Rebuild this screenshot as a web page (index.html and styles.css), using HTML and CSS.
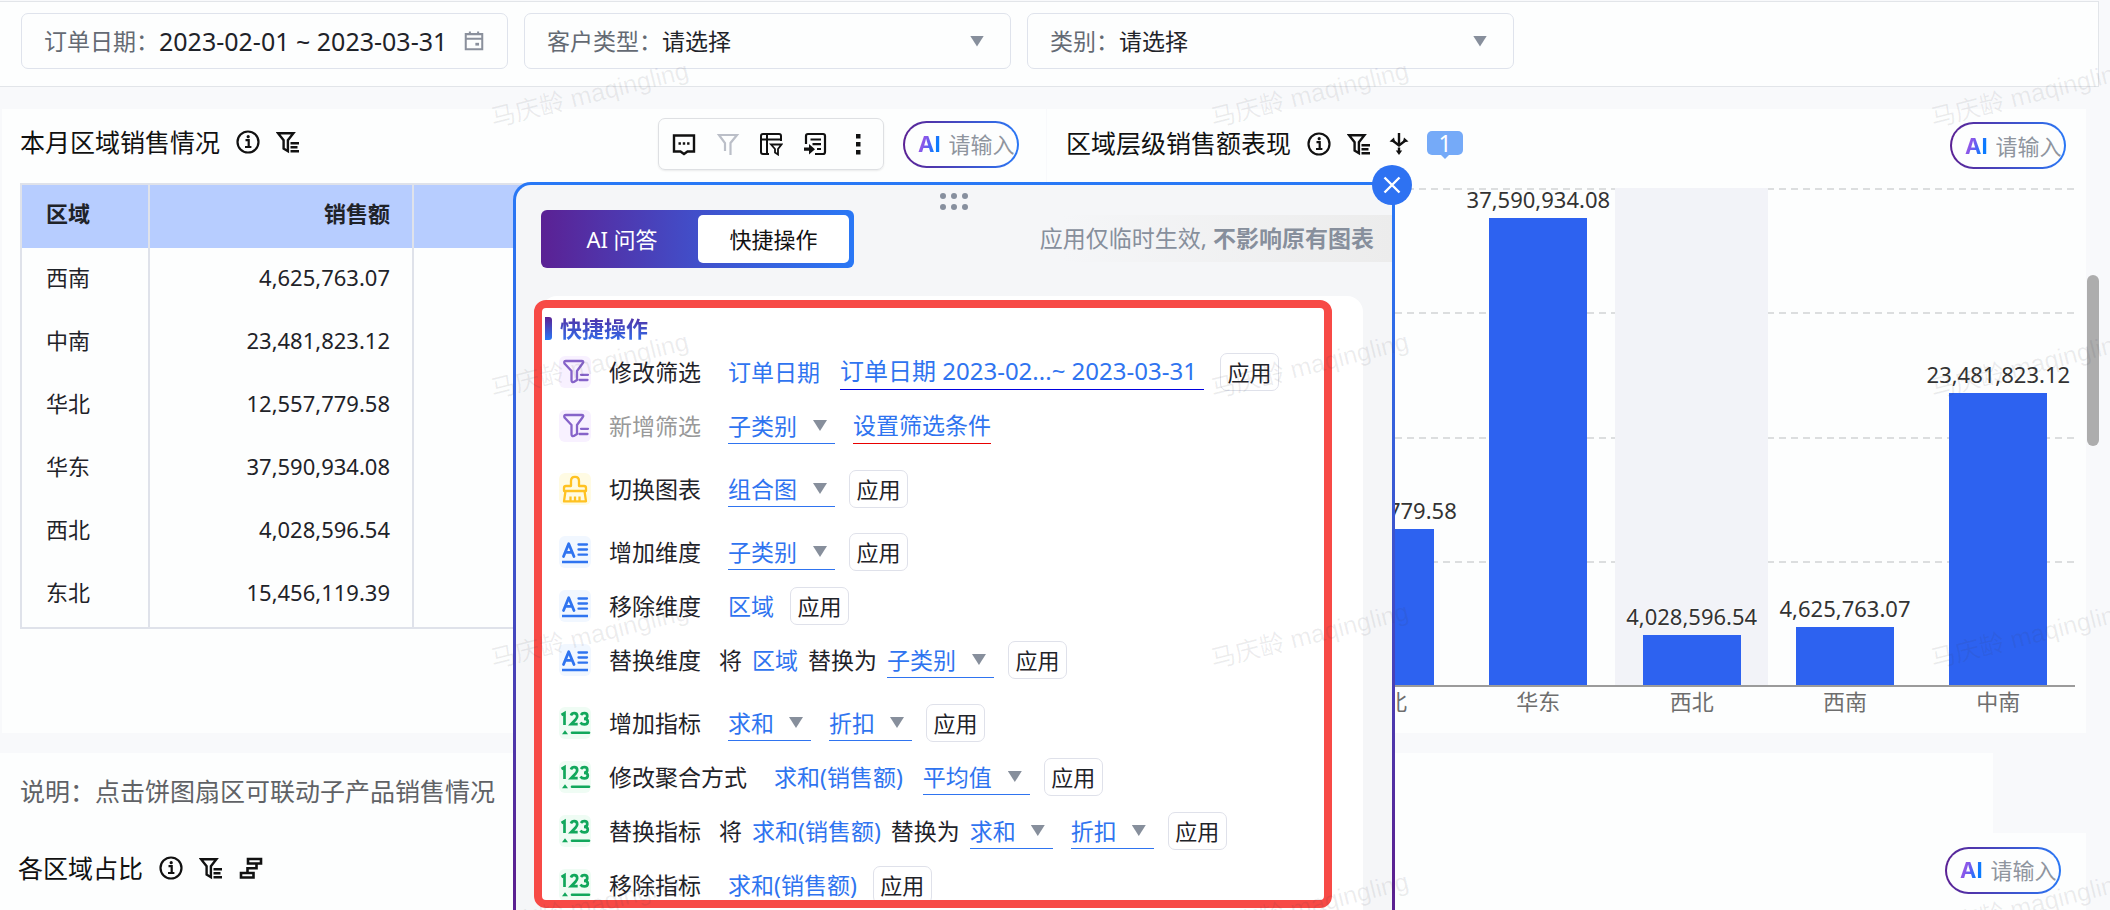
FILE: index.html
```html
<!DOCTYPE html>
<html lang="zh-CN">
<head>
<meta charset="utf-8">
<title>区域销售仪表盘</title>
<link rel="stylesheet" href="styles.css">
</head>
<body>
<svg class="defs" aria-hidden="true">
  <symbol id="i-info" viewBox="0 0 24 24"><circle cx="12" cy="12" r="10.5" fill="none" stroke="currentColor" stroke-width="2.2"/><path d="M9.500 10.200h3.200v6.600M9 17h6.400" fill="none" stroke="currentColor" stroke-width="2.200"/><circle cx="12.200" cy="6.700" r="1.600" fill="currentColor"/></symbol>
  <symbol id="i-filter" viewBox="0 0 24 24"><path d="M2 3.200h15.400L11.900 10.200v11L7.600 18.600V10.200zM14.500 13.200H23M14.500 17.200h7M14.500 21.200H23" fill="none" stroke="currentColor" stroke-width="2.400"/></symbol>
  <symbol id="i-drill" viewBox="0 0 24 24"><path d="M12 1v12M5 8l7 5.500L19 8" fill="none" stroke="currentColor" stroke-width="2.400"/><path d="M2.500 9.500 7 5.500l1.200 5zM21.500 9.500 17 5.500l-1.200 5z" fill="currentColor"/><path d="M12 15.500v4" stroke="currentColor" stroke-width="2.400"/><path d="M8.800 18.500h6.400L12 23z" fill="currentColor"/></symbol>
  <symbol id="i-link" viewBox="0 0 24 24"><path d="M9 3h13v4.500H9zM2 17h12.500v4.500H2zM17.500 7.500v4.700H8.500V17" fill="none" stroke="currentColor" stroke-width="2.600"/></symbol>
  <symbol id="i-calendar" viewBox="0 0 24 24"><path d="M3 4.500h18V21H3zM3 9.500h18M7.500 1.500v4M16.500 1.500v4" fill="none" stroke="currentColor" stroke-width="2.200"/><rect x="13.500" y="14" width="4" height="3" fill="currentColor"/></symbol>
  <symbol id="i-comment" viewBox="0 0 24 24"><path d="M2 3.500h20v16h-6.500L12 22l-3.500-2.500H2z" fill="none" stroke="currentColor" stroke-width="2.400"/><path d="M6.500 11.500h2.400M10.800 11.500h2.400M15.100 11.500h2.400" stroke="currentColor" stroke-width="2.400"/></symbol>
  <symbol id="i-funnel" viewBox="0 0 24 24"><path d="M9 19V11L3 3h18l-6.500 8v12" fill="none" stroke="currentColor" stroke-width="2.200"/></symbol>
  <symbol id="i-tablefilter" viewBox="0 0 24 24"><path d="M10 22H4a2 2 0 0 1-2-2V4a2 2 0 0 1 2-2h16a2 2 0 0 1 2 2v5M2 7.500h20M8 2v20" fill="none" stroke="currentColor" stroke-width="2"/><path d="M12 12.500h10.500L19 17v5.500l-3-2V17z" fill="none" stroke="currentColor" stroke-width="1.800"/></symbol>
  <symbol id="i-export" viewBox="0 0 24 24"><path d="M3 12V4a2 2 0 0 1 2-2h15a2 2 0 0 1 2 2v16a2 2 0 0 1-2 2h-8M7.500 7.500H18M9.500 12.200H18M14 17h4" fill="none" stroke="currentColor" stroke-width="2.200"/><path d="M1 15.500h5V12l6 5.200-6 5.200V18.800H1z" fill="currentColor"/></symbol>
  <symbol id="i-more" viewBox="0 0 24 24"><path d="M10 2h4.500v4.500H10zM10 10h4.500v4.500H10zM10 18h4.500v4.500H10z" fill="currentColor"/></symbol>
  <symbol id="i-opfilter" viewBox="0 0 32 32"><path d="M7 5h15.500q3 0 1 2.500L18 15v9l-3.200 2q-2.300.6-2.300-2v-9L5.500 7.500Q4.500 5 7 5zM22 18.800h7M20.500 24h8" fill="none" stroke="currentColor" stroke-width="2.300" stroke-linecap="round" stroke-linejoin="round"/></symbol>
  <symbol id="i-brush" viewBox="0 0 32 32"><path d="M5 18v-3q0-2 2-2h5V8q0-4.200 4-4.200T20 8v5h5q2 0 2 2v3zM6.500 18 5 28.300h22L25.500 18M11.500 28v-4.500M16 28v-4.500M20.500 28v-4.500" fill="none" stroke="currentColor" stroke-width="2.300" stroke-linejoin="round"/></symbol>
  <symbol id="i-dim" viewBox="0 0 32 32"><path d="M4.500 20.500 9.700 7.800 15 20.500M6.500 16.300h6.500" fill="none" stroke="currentColor" stroke-width="2.800" stroke-linecap="round" stroke-linejoin="round"/><path d="M19.500 8.500H28M19.500 13.500H28M19.500 18.700H28" stroke="currentColor" stroke-width="2.300" stroke-linecap="round"/><path d="M3 26h26" stroke="currentColor" stroke-width="2.300"/></symbol>
  <symbol id="i-num" viewBox="0 0 32 32"><path d="M2.500 8 5.500 6.200V18M12 8.500q.8-2.300 3.200-2.300 3 0 3 3 0 1.500-1.500 3.300l-4.500 4.600h6.500M22 8q1-1.800 3.300-1.800 3 0 3 2.800t-3.300 2.800q3.800 0 3.800 2.700 0 2.900-3.500 2.900-2.700 0-3.800-1.900" fill="none" stroke="currentColor" stroke-width="2.700"/><path d="M3 27.200 6 23.200l3 4z" fill="currentColor"/><path d="M13 25.700h17" stroke="currentColor" stroke-width="2.600" stroke-linecap="round"/></symbol>
</svg>

<header class="filters">
  <div class="filter"><label for="f-date">订单日期：</label><input id="f-date" class="date" type="text" value="2023-02-01 ~ 2023-03-31"><svg class="calendar"><use href="#i-calendar"/></svg></div>
  <div class="filter caret"><label for="f-customer">客户类型：</label><select id="f-customer"><option>请选择</option></select></div>
  <div class="filter caret"><label for="f-category">类别：</label><select id="f-category"><option>请选择</option></select></div>
</header>

<main class="board">
  <div class="cards">
    <section class="card">
      <div class="card-head">
        <h2>本月区域销售情况</h2>
        <svg class="icon"><use href="#i-info"/></svg>
        <svg class="icon"><use href="#i-filter"/></svg>
        <div class="toolbar">
          <button aria-label="评论"><svg class="icon"><use href="#i-comment"/></svg></button>
          <button aria-label="筛选" disabled><svg class="icon"><use href="#i-funnel"/></svg></button>
          <button aria-label="表格筛选"><svg class="icon"><use href="#i-tablefilter"/></svg></button>
          <button aria-label="导出"><svg class="icon"><use href="#i-export"/></svg></button>
          <button aria-label="更多"><svg class="icon"><use href="#i-more"/></svg></button>
        </div>
        <label class="ai"><span>AI</span><input type="text" placeholder="请输入"></label>
      </div>
      <table class="sales">
        <thead><tr><th>区域</th><th>销售额</th><th></th></tr></thead>
        <tbody>
          <tr><td>西南</td><td>4,625,763.07</td><td></td></tr>
          <tr><td>中南</td><td>23,481,823.12</td><td></td></tr>
          <tr><td>华北</td><td>12,557,779.58</td><td></td></tr>
          <tr><td>华东</td><td>37,590,934.08</td><td></td></tr>
          <tr><td>西北</td><td>4,028,596.54</td><td></td></tr>
          <tr><td>东北</td><td>15,456,119.39</td><td></td></tr>
        </tbody>
      </table>
    </section>

    <section class="card chart-card">
      <div class="card-head">
        <h2>区域层级销售额表现</h2>
        <svg class="icon"><use href="#i-info"/></svg>
        <svg class="icon"><use href="#i-filter"/></svg>
        <svg class="icon"><use href="#i-drill"/></svg>
        <span class="count">1</span>
        <label class="ai push"><span>AI</span><input type="text" placeholder="请输入"></label>
      </div>
      <div class="chart">
        <div class="plot">
          <div class="grid"><i></i><i></i><i></i><i></i></div>
          <div class="band"><span>15,456,119.39</span><div class="bar" style="height:38.6%"></div></div>
          <div class="band"><span>12,557,779.58</span><div class="bar" style="height:31.4%"></div></div>
          <div class="band"><span>37,590,934.08</span><div class="bar" style="height:94%"></div></div>
          <div class="band hover"><span>4,028,596.54</span><div class="bar" style="height:10.1%"></div></div>
          <div class="band"><span>4,625,763.07</span><div class="bar" style="height:11.6%"></div></div>
          <div class="band"><span>23,481,823.12</span><div class="bar" style="height:58.7%"></div></div>
        </div>
        <div class="axis"><span>东北</span><span>华北</span><span>华东</span><span>西北</span><span>西南</span><span>中南</span></div>
      </div>
    </section>
  </div>

  <p class="note">说明：点击饼图扇区可联动子产品销售情况</p>
  <section class="card share">
    <div class="card-head">
      <h2>各区域占比</h2>
      <svg class="icon"><use href="#i-info"/></svg>
      <svg class="icon"><use href="#i-filter"/></svg>
      <svg class="icon"><use href="#i-link"/></svg>
      <label class="ai push"><span>AI</span><input type="text" placeholder="请输入"></label>
    </div>
  </section>
  <div class="scrollbar"></div>
</main>

<aside class="panel">
  <button class="close" aria-label="关闭"><svg viewBox="0 0 40 40"><path d="M12.500 12.500l15 15M27.500 12.500l-15 15" stroke="currentColor" stroke-width="2.400" fill="none"/></svg></button>
  <svg class="drag" viewBox="0 0 30 20"><g fill="#878f9e"><circle cx="4" cy="4" r="3"/><circle cx="15" cy="4" r="3"/><circle cx="26" cy="4" r="3"/><circle cx="4" cy="15" r="3"/><circle cx="15" cy="15" r="3"/><circle cx="26" cy="15" r="3"/></g></svg>
  <div class="panel-head">
    <div class="tabs"><button>AI 问答</button><button class="active">快捷操作</button></div>
    <p class="notice">应用仅临时生效, <b>不影响原有图表</b></p>
  </div>
  <div class="ops">
    <h3>快捷操作</h3>
    <div class="op purple"><svg class="op-icon"><use href="#i-opfilter"/></svg><span class="name">修改筛选</span><a href="#">订单日期</a><a href="#" class="line range">订单日期 2023-02...~ 2023-03-31</a><button>应用</button></div>
    <div class="op purple off"><svg class="op-icon"><use href="#i-opfilter"/></svg><span class="name">新增筛选</span><span class="pick caret"><select aria-label="新增筛选字段"><option>子类别</option></select></span><a href="#" class="line error">设置筛选条件</a></div>
    <div class="op yellow gap"><svg class="op-icon"><use href="#i-brush"/></svg><span class="name">切换图表</span><span class="pick caret"><select aria-label="图表类型"><option>组合图</option></select></span><button>应用</button></div>
    <div class="op blue gap"><svg class="op-icon"><use href="#i-dim"/></svg><span class="name">增加维度</span><span class="pick caret"><select aria-label="增加的维度"><option>子类别</option></select></span><button>应用</button></div>
    <div class="op blue"><svg class="op-icon"><use href="#i-dim"/></svg><span class="name">移除维度</span><a href="#">区域</a><button>应用</button></div>
    <div class="op blue"><svg class="op-icon"><use href="#i-dim"/></svg><span class="name tight">替换维度</span><span class="phrase">将 <a href="#">区域</a> 替换为</span><span class="pick caret"><select aria-label="替换为维度"><option>子类别</option></select></span><button>应用</button></div>
    <div class="op green gap"><svg class="op-icon"><use href="#i-num"/></svg><span class="name">增加指标</span><span class="pick short caret"><select aria-label="增加指标聚合"><option>求和</option></select></span><span class="pick short caret"><select aria-label="增加的指标"><option>折扣</option></select></span><button>应用</button></div>
    <div class="op green"><svg class="op-icon"><use href="#i-num"/></svg><span class="name">修改聚合方式</span><a href="#">求和(销售额)</a><span class="pick caret"><select aria-label="聚合方式"><option>平均值</option></select></span><button>应用</button></div>
    <div class="op green"><svg class="op-icon"><use href="#i-num"/></svg><span class="name tight">替换指标</span><span class="phrase">将 <a href="#">求和(销售额)</a> 替换为</span><span class="pick short caret"><select aria-label="替换指标聚合"><option>求和</option></select></span><span class="pick short caret"><select aria-label="替换为指标"><option>折扣</option></select></span><button>应用</button></div>
    <div class="op green"><svg class="op-icon"><use href="#i-num"/></svg><span class="name">移除指标</span><a href="#">求和(销售额)</a><button>应用</button></div>
  </div>
  <div class="highlight"></div>
</aside>

<div class="watermark" aria-hidden="true">
  <span>马庆龄 maqingling</span><span>马庆龄 maqingling</span><span>马庆龄 maqingling</span>
  <span>马庆龄 maqingling</span><span>马庆龄 maqingling</span><span>马庆龄 maqingling</span>
  <span>马庆龄 maqingling</span><span>马庆龄 maqingling</span><span>马庆龄 maqingling</span>
  <span>马庆龄 maqingling</span><span>马庆龄 maqingling</span><span>马庆龄 maqingling</span>
</div>
</body>
</html>
```
FILE: styles.css
```css
* { box-sizing: border-box; margin: 0; padding: 0; }

body {
  position: relative;
  display: flex;
  flex-direction: column;
  height: 100vh;
  overflow: hidden;
  background: #f8f9fb;
  color: #1f2329;
  font-family: "Noto Sans", "Noto Sans CJK SC", sans-serif;
  font-size: 23px;
  line-height: 34px;
}

button, input, select { font: inherit; color: inherit; border: 0; background: none; outline: 0; }
select { appearance: none; }
a { color: #2f74f0; text-decoration: none; }
.defs { position: absolute; width: 0; height: 0; }
.icon { width: 24px; height: 24px; flex: none; }

/* filter bar */
.filters {
  display: flex;
  gap: 16px;
  margin: 1px 11px 0 0;
  padding: 11px 20px 17px 21px;
  background: #fdfefe;
  border: 1px solid #e2e5e9;
  border-left: 0;
}
.filter {
  position: relative;
  display: flex;
  align-items: center;
  width: 487px;
  height: 56px;
  padding: 0 22px;
  border: 1px solid #dfe3ec;
  border-radius: 7px;
}
.filter label { color: #646a73; white-space: nowrap; }
.filter input, .filter select { flex: 1; min-width: 0; }
.filter .date { font-size: 25px; }
.calendar { width: 22px; height: 22px; color: #8a909c; flex: none; }

.caret::after {
  content: "";
  width: 14px;
  height: 11px;
  background: #878f9c;
  clip-path: polygon(0 0, 100% 0, 50% 100%);
  pointer-events: none;
}
.filter.caret::after { margin-right: 4px; }

/* board */
.board { position: relative; display: flex; flex-direction: column; flex: 1; min-height: 0; padding: 22px 24px 0 2px; }
.cards { display: grid; grid-template-columns: 1044fr 1040fr; height: 624px; flex: none; margin-bottom: 20px; }
.card { background: #fdfefe; min-width: 0; }
.chart-card { display: flex; flex-direction: column; border-left: 1px solid #f8f9fb; }
.card-head { display: flex; align-items: center; gap: 16px; height: 69px; padding: 1px 27px 0 18px; }
.card-head h2 { padding-bottom: 5px; font-size: 25px; font-weight: 400; color: #111; white-space: nowrap; }
.card-head .icon { color: #111; margin-bottom: 4px; }

.toolbar {
  display: flex;
  align-items: center;
  justify-content: space-between;
  width: 226px;
  height: 52px;
  margin-left: auto;
  padding: 0 13px;
  border: 1px solid #dee0e3;
  border-radius: 7px;
  box-shadow: 0 1px 2px #00000014;
}
.toolbar button { display: flex; }
.toolbar .icon { margin: 0; }
.toolbar button:disabled .icon { color: #bbbfc8; }

.ai {
  display: flex;
  align-items: center;
  gap: 8px;
  width: 116px;
  height: 47px;
  flex: none;
  margin-left: 3px;
  padding-left: 13px;
  border: 2px solid transparent;
  border-radius: 24px;
  background: linear-gradient(#fdfefe, #fdfefe) padding-box, linear-gradient(90deg, #5b2194, #2a78f6) border-box;
}
.ai.push { margin-left: auto; }
.ai span {
  font-family: Inter, sans-serif;
  font-size: 22px;
  font-weight: 700;
  background: linear-gradient(110deg, #d04fd8 0, #6a5cf0 45%, #0a7bff 70%);
  background-clip: text;
  color: transparent;
}
.ai input { width: 68px; font-size: 22px; }
.ai input::placeholder { color: #8f959e; opacity: 1; }

.count {
  position: relative;
  width: 36px;
  height: 24px;
  margin-bottom: 5px;
  border-radius: 5px;
  background: #75aaf8;
  color: #fff;
  line-height: 24px;
  text-align: center;
}
.count::after {
  content: "";
  position: absolute;
  left: 13px;
  top: 23px;
  border: 5px solid transparent;
  border-top-color: #75aaf8;
  border-bottom: 0;
}

/* table */
.sales {
  width: calc(100% - 36px);
  height: 446px;
  margin: 5px 18px 0;
  border-collapse: collapse;
  table-layout: fixed;
  font-size: 22px;
  border: 2px solid #dfe2ea;
}
.sales th, .sales td { padding: 0 22px 6px 24px; text-align: left; border-right: 2px solid #dfe2ea; }
.sales th { height: 64px; padding-bottom: 8px; background: #b7cdff; }
.sales th:first-child { width: 128px; }
.sales th:nth-child(2) { width: 264px; }
.sales :is(th, td):nth-child(2) { text-align: right; }

/* chart */
.chart-card .card-head { padding: 4px 20px 0 19px; }
.chart { margin: 10px 11px 0 108px; }
.plot { position: relative; display: grid; grid-template-columns: repeat(6, 1fr); height: 499px; border-bottom: 2px solid #9b9b9b; }
.grid { position: absolute; inset: 0; display: grid; grid-template-rows: repeat(4, 1fr); }
.grid i { background: repeating-linear-gradient(90deg, #dcdedf 0 7px, transparent 7px 12px) top / 100% 2px no-repeat; }
.band { position: relative; display: flex; flex-direction: column; justify-content: flex-end; align-items: center; min-height: 0; font-size: 22px; color: #333; }
.band.hover { background: #f2f3f8; }
.band span { white-space: nowrap; line-height: 34px; margin: 0 -10px 2px; text-shadow: 0 0 2px #fff, 0 0 2px #fff; }
.bar { flex: none; width: 64%; background: #2d62f0; }
.axis { display: grid; grid-template-columns: repeat(6, 1fr); font-size: 22px; text-align: center; color: #6e6e6e; line-height: 28px; }

.note { margin: 0 93px 0 -2px; padding: 21px 20px 25px; background: #fdfefe; font-size: 25px; color: #606266; }
.share { flex: 1; min-height: 0; margin-left: -2px; }
.share .card-head { padding: 5px 25px 0 18px; }
.scrollbar { position: absolute; right: 11px; top: 188px; width: 12px; height: 171px; border-radius: 6px; background: #adadad; }

/* floating panel */
.panel {
  position: absolute;
  left: 513px;
  top: 182px;
  bottom: 0;
  display: flex;
  flex-direction: column;
  width: 882px;
  border: 3px solid transparent;
  border-bottom: 0;
  border-radius: 18px 0 0 0;
  background: linear-gradient(#f5f6f8, #f5f6f8) padding-box, linear-gradient(#2878f6, #2f6be8 20%, #3f4fc8 55%, #5b2191 95%) border-box;
}
.close {
  position: absolute;
  right: -20px;
  top: -20px;
  width: 40px;
  height: 40px;
  border-radius: 50%;
  background: #2e72f2;
  color: #fff;
}
.close svg { display: block; }
.drag { display: block; flex: none; width: 30px; height: 20px; margin: 7px auto 0; }
.panel-head { display: flex; justify-content: space-between; padding-left: 25px; }
.tabs {
  display: grid;
  grid-template-columns: 1fr 151px;
  width: 313px;
  height: 58px;
  margin: -2px 0 0;
  padding: 5px;
  border-radius: 6px;
  background: linear-gradient(90deg, #5b2194, #414fca 50%, #2a78f6);
  font-size: 22px;
  color: #fff;
}
.tabs .active { border-radius: 5px; background: #fff; color: #111; }
.notice { height: 47px; margin-top: 3px; padding: 0 18px 0 60px; line-height: 47px; color: #878f9c; background: linear-gradient(90deg, #f5f6f8 20%, #ececec); }

.ops {
  flex: 1;
  min-height: 0;
  overflow: hidden;
  margin: 28px 29px 0 25px;
  padding-top: 15px;
  border-radius: 16px 16px 0 0;
  background: #fff;
}
.ops h3 {
  display: flex;
  align-items: center;
  gap: 8px;
  margin: 0 4px 0;
  font-size: 22px;
  background: linear-gradient(#5b2194, #2a78f6);
  background-clip: text;
  color: transparent;
}
.ops h3::before { content: ""; width: 7px; height: 23px; border-radius: 0 3px 3px 0; background: linear-gradient(#5b2194, #2a78f6); }
.op { display: flex; align-items: center; height: 54px; padding-left: 18px; white-space: nowrap; }
.op.gap { margin-top: 9px; }
.op-icon { width: 32px; height: 32px; flex: none; margin-right: 18px; border-radius: 6px; }
.purple .op-icon { color: #8663c9; background: #f8f1ff; }
.yellow .op-icon { color: #ffc222; background: #fffbe3; }
.blue .op-icon { color: #2f74f0; background: #f1f7ff; }
.green .op-icon { color: #12a75c; background: #effcf4; }
.name { margin-right: 27px; }
.name.tight { margin-right: 18px; }
.off .name { color: #999; }
.op a { margin-right: 20px; }
.pick { margin-right: 18px; }
.op .phrase { margin-right: 10px; }
.op .phrase a { margin: 0 4px; }
.line { height: 36px; border-bottom: 1px solid #2f74f0; }
.range { font-size: 24px; min-width: 364px; border-bottom-color: #0000e0; }
.line.error { border-bottom-color: #e80000; }
.pick { display: flex; align-items: center; width: 107px; height: 36px; border-bottom: 1px solid #2f74f0; }
.pick.short { width: 83px; }
.pick select { flex: 1; min-width: 0; color: #2f74f0; }
.pick.caret::after { margin-right: 8px; }
.op button { width: 59px; height: 38px; margin-left: -4px; font-size: 22px; border: 1px solid #dfe1ea; border-radius: 7px; }

.highlight {
  position: absolute;
  left: 18px;
  right: 60px;
  top: 115px;
  bottom: 2px;
  border: 8px solid #f74a46;
  border-radius: 12px;
  pointer-events: none;
}

/* watermark */
.watermark {
  position: absolute;
  inset: 0;
  overflow: hidden;
  display: grid;
  grid-template: 228px repeat(3, 270px) / repeat(3, 720px);
  justify-items: center;
  padding-left: 229px;
  pointer-events: none;
  font-family: "Liberation Sans", "Noto Sans CJK SC", sans-serif;
  font-size: 25px;
  color: rgb(60 60 70 / 9%);
}
.watermark span { height: 34px; margin-top: 120px; transform: rotate(-14deg); }
.watermark span:nth-child(-n + 3) { margin-top: 77px; }
```
